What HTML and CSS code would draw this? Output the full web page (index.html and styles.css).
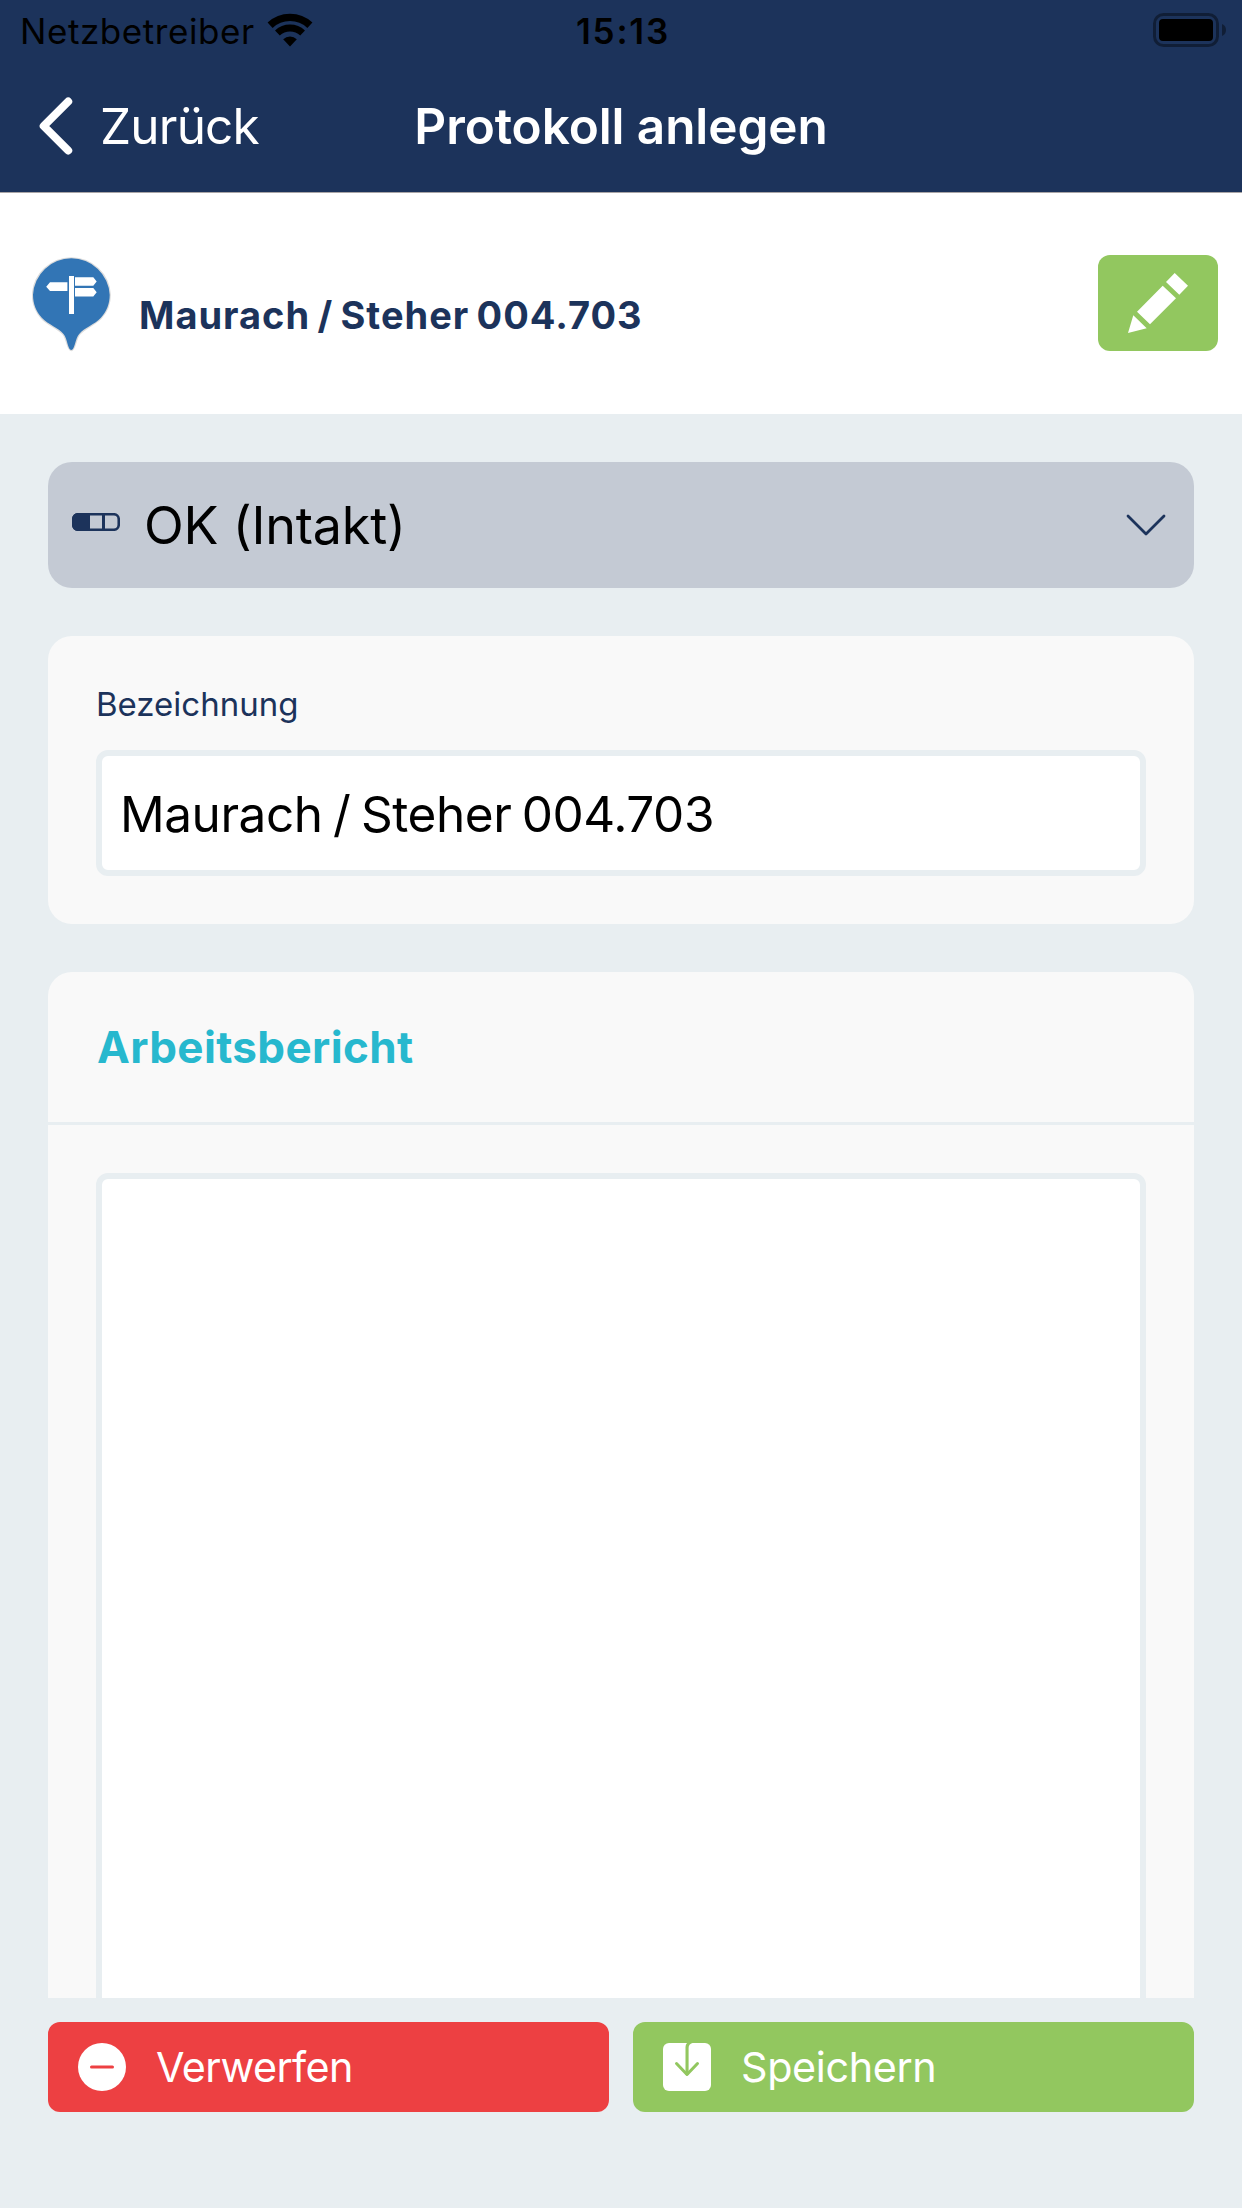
FILE: index.html
```html
<!DOCTYPE html>
<html lang="de">
<head>
  <meta charset="UTF-8" />
  <meta name="viewport" content="width=device-width, initial-scale=1.0" />
  <title>Protokoll anlegen</title>
  <link rel="stylesheet" href="styles.css">
</head>
<body>
  <div class="statusbar">
    <div class="carrier">
      <span>Netzbetreiber</span>
      <svg class="wifi" viewBox="0 0 46 34">
        <path d="M3.1 12.2 A29.2 29.2 0 0 1 42.9 12.2" fill="none" stroke="#000" stroke-width="7.4" />
        <path d="M10.4 20 A18.5 18.5 0 0 1 35.6 20" fill="none" stroke="#000" stroke-width="7" />
        <path d="M23 33.5 L16.2 26.2 A10 10 0 0 1 29.8 26.2 Z" />
      </svg>
    </div>
    <span class="time">15:13</span>
    <svg class="battery" viewBox="0 0 73 34">
      <rect x="1.5" y="1.5" width="63" height="31" rx="9" fill="none" stroke="#000" stroke-opacity="0.4" stroke-width="3" />
      <rect x="6" y="6" width="54" height="22" rx="4" />
      <path d="M69 11 A6.5 6.5 0 0 1 69 23 Z" fill-opacity="0.4" />
    </svg>
  </div>

  <div class="navbar">
    <a class="back">
      <svg viewBox="0 0 34 58">
        <path d="M29.2 4.5 L4.7 29 L29.2 53.5" fill="none" stroke="#fff" stroke-width="8" stroke-linecap="round" stroke-linejoin="round" />
      </svg>
      <span>Zurück</span>
    </a>
    <h1>Protokoll anlegen</h1>
  </div>

  <div class="header">
    <svg class="pin" viewBox="12 10 79 97">
      <path d="M51.3 105 C47.8 105 47.6 94 43.5 89 C38.5 83 28.5 79.8 21.8 72.8 C16 66.5 13 58.5 13 49.8 A38.4 38.4 0 0 1 89.7 49.8 C89.7 58.5 86.7 66.5 80.9 72.8 C74.2 79.8 64.2 83 59.2 89 C55 94 54.8 105 51.3 105 Z" fill="#3275b5" stroke="#dcdcdc" stroke-width="2.4" paint-order="stroke" />
      <path d="M49 31h5v38h-5z M26.2 41.7 L30 37.3 H47.4 V46 H30 Z M55 32.3 H73.3 L76.7 36.5 L73.3 40.7 H55 Z M55 43 H73.3 L76.7 47.2 L73.3 51.4 H55 Z" fill="#fff" />
    </svg>
    <h2>Maurach / Steher 004.703</h2>
    <button class="edit" aria-label="Bearbeiten">
      <svg viewBox="0 0 60 60">
        <path d="M0 60 L5.3 42.3 L18.7 55.3 Z M9 38.7 L34.7 12.7 L48 25.2 L22 51.3 Z M38 9 L46.7 0 L60 12.7 L51.3 21.7 Z" fill="#fff" />
      </svg>
    </button>
  </div>

  <div class="content">
    <div class="select">
      <svg class="level" viewBox="0 0 48 18">
        <rect x="1.25" y="1.25" width="45.5" height="15.5" rx="5" fill="none" stroke="#1c335b" stroke-width="2.6" />
        <path d="M6 0 H18 V18 H6 A6 6 0 0 1 0 12 V6 A6 6 0 0 1 6 0 Z M30 1 H33 V17 H30 Z" fill="#1c335b" />
      </svg>
      <span>OK (Intakt)</span>
      <svg class="arrow" viewBox="0 0 40 22">
        <path d="M2 2 L20 20 L38 2" fill="none" stroke="#1c335b" stroke-width="2.8" stroke-linecap="round" stroke-linejoin="round" />
      </svg>
    </div>

    <div class="card field">
      <label for="name">Bezeichnung</label>
      <input type="text" id="name" value="Maurach / Steher 004.703" />
    </div>

    <div class="card report">
      <h3>Arbeitsbericht</h3>
      <div class="report-body">
        <textarea></textarea>
      </div>
    </div>
  </div>

  <div class="footer">
    <button class="discard">
      <svg viewBox="0 0 48 48">
        <circle cx="24" cy="24" r="24" fill="#fff" />
        <path d="M13.5 24 H34.5" stroke="#ed4042" stroke-width="3" stroke-linecap="round" />
      </svg>
      <span>Verwerfen</span>
    </button>
    <button class="save">
      <svg viewBox="0 0 48 48">
        <rect width="48" height="48" rx="6" fill="#fff" />
        <path d="M24 0 H29.5 Q25.6 1 25.6 5 V32 H22.5 V4 Q22.5 1.5 24 0 Z" fill="#92c75f" />
        <path d="M13.5 20.5 L24 31.5 L34.5 20.5" fill="none" stroke="#92c75f" stroke-width="3" stroke-linecap="round" stroke-linejoin="round" />
      </svg>
      <span>Speichern</span>
    </button>
  </div>
</body>
</html>
```
FILE: styles.css
```css
* {
  box-sizing: border-box;
}
body {
  margin: 0;
  height: 100vh;
  display: flex;
  flex-direction: column;
  overflow: hidden;
  background: #e8eef1;
  font-family: Inter, "Liberation Sans", sans-serif;
  color: #000;
}
svg {
  display: block;
  flex: none;
}
h1, h2, h3 {
  margin: 0;
}
button {
  border: none;
  padding: 0;
  font-family: inherit;
  cursor: pointer;
}
.statusbar {
  height: 60px;
  padding: 0 16px 0 20px;
  display: grid;
  grid-template-columns: 1fr auto 1fr;
  align-items: center;
  background: #1c335b;
  font-size: 35px;
  line-height: 42px;
}
.carrier {
  display: flex;
  align-items: center;
  letter-spacing: 0.57px;
}
.carrier span {
  padding-top: 1px;
}
.wifi {
  width: 46px;
  height: 34px;
  margin-left: 12px;
}
.time {
  padding-top: 1px;
  font-weight: 600;
  letter-spacing: 1.8px;
}
.battery {
  width: 73px;
  height: 34px;
  justify-self: end;
}
.navbar {
  height: 133px;
  padding: 0 39px 1px;
  display: grid;
  grid-template-columns: 1fr auto 1fr;
  align-items: center;
  background: #1c335b;
  border-bottom: 1px solid #a9a5a6;
  color: #fff;
  font-size: 49.5px;
}
.back {
  display: flex;
  align-items: center;
  letter-spacing: -0.8px;
}
.back svg {
  width: 34px;
  height: 58px;
  margin-right: 27px;
}
.navbar h1 {
  font-size: 49.5px;
  font-weight: 600;
  letter-spacing: -0.09px;
}
.header {
  height: 221px;
  padding: 0 24px 1px 32px;
  display: flex;
  align-items: center;
  background: #fff;
}
.pin {
  width: 79px;
  height: 97px;
}
.header h2 {
  flex: 1;
  margin: 24px 0 0 28px;
  font-size: 38px;
  font-weight: 700;
  letter-spacing: 0.98px;
  word-spacing: -2.6px;
  color: #1c335b;
}
.edit {
  width: 120px;
  height: 96px;
  border-radius: 12px;
  background: #92c75f;
}
.edit svg {
  width: 60px;
  height: 60px;
  margin: 0 auto;
}
.content {
  flex: 1;
  min-height: 0;
  padding: 48px 48px 0;
  display: flex;
  flex-direction: column;
  gap: 48px;
  overflow: hidden;
}
.select {
  flex: none;
  height: 126px;
  padding: 0 28px 0 24px;
  display: flex;
  align-items: center;
  border-radius: 24px;
  background: #c4cad4;
  font-size: 52px;
  letter-spacing: -0.2px;
}
.select span {
  flex: 1;
  margin-left: 24px;
}
.level {
  width: 48px;
  height: 18px;
  margin-bottom: 6px;
}
.arrow {
  width: 40px;
  height: 22px;
}
.card {
  flex: none;
  border-radius: 24px;
  background: #f9f9f9;
}
.field {
  padding: 48px;
}
.field label {
  display: block;
  margin-bottom: 26px;
  font-size: 33px;
  line-height: 40px;
  color: #1c335b;
}
.field input {
  display: block;
  width: 100%;
  height: 126px;
  padding: 2px 18px 0;
  border: 6px solid #e8eef1;
  border-radius: 12px;
  background: #fff;
  font-family: inherit;
  font-size: 49.5px;
  letter-spacing: -0.45px;
  word-spacing: -3px;
  color: #000;
}
.report h3 {
  height: 153px;
  padding-left: 49px;
  border-bottom: 3px solid #e8eef1;
  font-size: 44px;
  font-weight: 700;
  line-height: 150px;
  letter-spacing: 0.37px;
  color: #27b8ce;
}
.report-body {
  padding: 48px;
}
.report textarea {
  display: block;
  width: 100%;
  height: 1200px;
  border: 6px solid #e8eef1;
  border-radius: 12px;
  background: #fff;
  resize: none;
}
.footer {
  flex: none;
  padding: 24px 48px 96px;
  display: grid;
  grid-template-columns: 1fr 1fr;
  gap: 24px;
}
.footer button {
  height: 90px;
  padding-left: 30px;
  display: flex;
  align-items: center;
  gap: 30px;
  border-radius: 12px;
  font-size: 41.3px;
  color: #fff;
}
.footer svg {
  width: 48px;
  height: 48px;
}
.discard {
  background: #ed4042;
  letter-spacing: -0.6px;
}
.save {
  background: #92c75f;
  letter-spacing: -0.35px;
}
```
